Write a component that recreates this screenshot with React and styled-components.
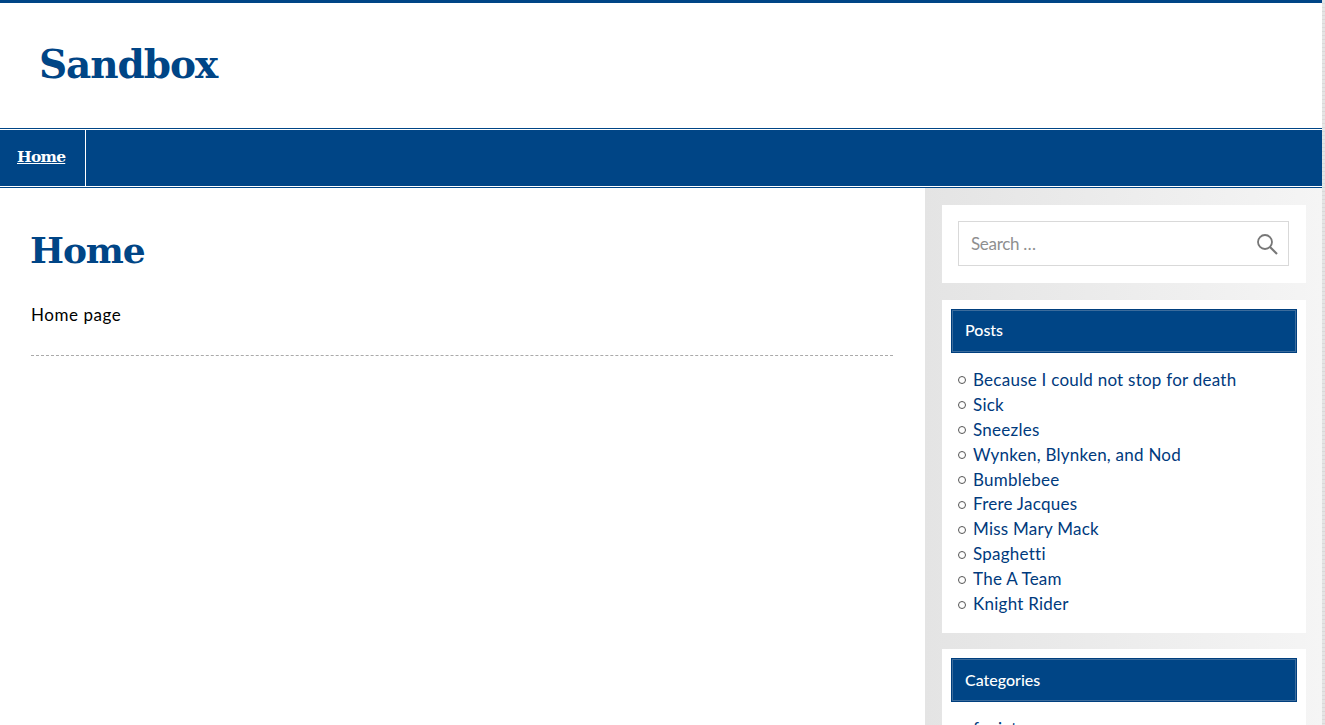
import React from "react";
import styled, { createGlobalStyle } from "styled-components";

const BLUE = "#004586";
const SLAB = `"DejaVu Serif", "Liberation Serif", serif`;
const SANS = `Lato, "Open Sans", "Liberation Sans", sans-serif`;

const Global = createGlobalStyle`
  html, body { margin: 0; padding: 0; height: 100%; overflow: hidden; background: #fff; }
  *, *::before, *::after { box-sizing: border-box; }
`;

const Frame = styled.div`
  display: grid;
  grid-template-columns: 1fr 3px;
  height: 725px;
  overflow: hidden;
  font-family: ${SANS};
`;

const Page = styled.div`
  display: flex;
  flex-direction: column;
  min-width: 0;
`;

const ScrollStrip = styled.div`
  background: repeating-linear-gradient(180deg, #e4e4e4 0, #e4e4e4 3px, #d9d9d9 3px, #d9d9d9 4px);
`;

const Header = styled.header`
  height: 128px;
  border-top: 3px solid ${BLUE};
  padding: 33px 0 0 39px;
  flex: none;
`;

const SiteTitle = styled.div`
  font-family: ${SLAB};
  font-weight: 700;
  font-size: 39px;
  line-height: 56px;
  color: ${BLUE};
  letter-spacing: -1.07px;
`;

const Nav = styled.nav`
  flex: none;
  border-top: 1px solid ${BLUE};
  border-bottom: 1px solid ${BLUE};
  padding: 1px 0;
  background: #fff;
`;

const NavBar = styled.div`
  display: flex;
  height: 56px;
  background: ${BLUE};
`;

const NavItem = styled.a`
  display: flex;
  align-items: center;
  width: 86px;
  padding: 0 0 3px 17px;
  border-right: 1px solid #fff;
  color: #fff;
  font-family: ${SLAB};
  font-weight: 700;
  font-size: 15.5px;
  letter-spacing: -0.75px;
  text-decoration: underline;
`;

const Main = styled.div`
  flex: 1;
  display: grid;
  grid-template-columns: 925px 397px;
  min-height: 0;
`;

const Content = styled.main`
  padding: 36px 32px 0 31px;
`;

const PageTitle = styled.h1`
  margin: 0 0 0 -1px;
  font-family: ${SLAB};
  font-weight: 700;
  font-size: 36px;
  line-height: 52px;
  color: ${BLUE};
  letter-spacing: -1.1px;
`;

const Entry = styled.div`
  margin-top: 26px;
  padding-bottom: 28px;
  border-bottom: 1px dashed #aaa;
  font-size: 17px;
  line-height: 25px;
  letter-spacing: 0.55px;
  color: #000;
`;

const Sidebar = styled.aside`
  padding: 17px 16px 0 17px;
  background: linear-gradient(90deg, #e4e4e4, #f5f5f5);
  display: flex;
  flex-direction: column;
  gap: 16.5px;
  overflow: hidden;
`;

const Widget = styled.section`
  flex: none;
  background: #fff;
  padding: ${(p) => p.$pad};
`;

const SearchBox = styled.div`
  display: flex;
  align-items: center;
  justify-content: space-between;
  height: 45px;
  border: 1px solid #d9d9d9;
  padding: 0 10px 0 12px;
  color: #8f8f8f;
  font-size: 17px;
  letter-spacing: -0.3px;
`;

const WidgetTitle = styled.h3`
  margin: 0;
  height: 44px;
  display: flex;
  align-items: center;
  padding: 0 0 ${(p) => p.$drop}px 13px;
  background: ${BLUE};
  border: 1px solid #003f7e;
  box-shadow: inset 0 0 0 1px #3c6c9c;
  color: #fff;
  font-size: 16px;
  font-weight: 500;
`;

const List = styled.ul`
  margin: 15.4px 0 0;
  padding: 0 0 0 7px;
  list-style: none;
  font-size: 17px;
  line-height: 24.9px;
  letter-spacing: 0.25px;
`;

const Item = styled.li`
  display: flex;
  align-items: center;
  &::before {
    content: "";
    flex: none;
    width: 8px;
    height: 8px;
    margin-right: 7px;
    border: 1px solid #555;
    border-radius: 50%;
  }
`;

const ItemLink = styled.a`
  color: #003a7d;
`;

const SearchIcon = () => (
  <svg width="22" height="22" viewBox="0 0 22 22" fill="none" stroke="#777" strokeWidth="1.8">
    <circle cx="9" cy="9" r="7" />
    <path d="M14 14l7 7" strokeWidth="2.2" />
  </svg>
);

const posts = [
  "Because I could not stop for death",
  "Sick",
  "Sneezles",
  "Wynken, Blynken, and Nod",
  "Bumblebee",
  "Frere Jacques",
  "Miss Mary Mack",
  "Spaghetti",
  "The A Team",
  "Knight Rider",
];

export default function App() {
  return (
    <>
      <Global />
      <Frame>
        <Page>
          <Header>
            <SiteTitle>Sandbox</SiteTitle>
          </Header>
          <Nav>
            <NavBar>
              <NavItem>Home</NavItem>
            </NavBar>
          </Nav>
          <Main>
            <Content>
              <PageTitle>Home</PageTitle>
              <Entry>Home page</Entry>
            </Content>
            <Sidebar>
              <Widget $pad="16px 17px 17px 16px">
                <SearchBox>
                  Search …
                  <SearchIcon />
                </SearchBox>
              </Widget>
              <Widget $pad="9px 9px 15.6px 9px">
                <WidgetTitle $drop={3}>Posts</WidgetTitle>
                <List>
                  {posts.map((p) => (
                    <Item key={p}>
                      <ItemLink>{p}</ItemLink>
                    </Item>
                  ))}
                </List>
              </Widget>
              <Widget $pad="9px 9px 16px 9px">
                <WidgetTitle $drop={1}>Categories</WidgetTitle>
                <List>
                  <Item>
                    <ItemLink>fugiat</ItemLink>
                  </Item>
                </List>
              </Widget>
            </Sidebar>
          </Main>
        </Page>
        <ScrollStrip />
      </Frame>
    </>
  );
}
